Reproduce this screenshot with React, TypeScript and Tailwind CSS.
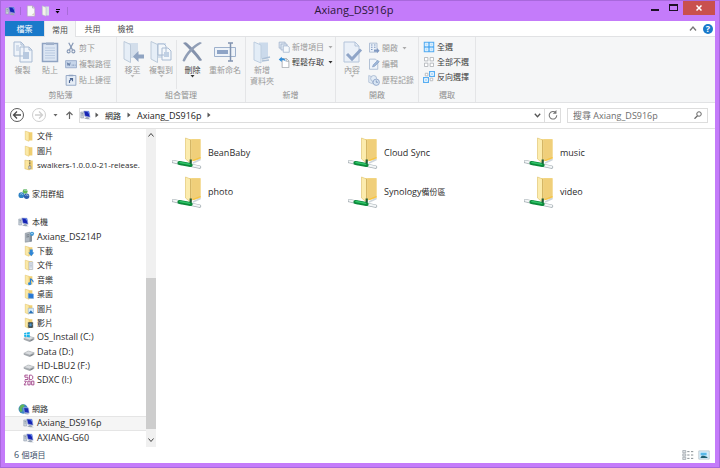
import type { ReactNode } from "react";

const INK = "#8395b3";
const PALE = "#dfe8f3";

/* ---------- text ---------- */

function Mixed({ children }: { children: string }) {
  const parts = children.split(/([\u3000-\u9fff]+)/).filter(Boolean);
  return (
    <span className={`whitespace-pre ${children.length > 20 ? "text-[8px]" : ""}`}>
      {parts.map((part, i) =>
        /[\u3000-\u9fff]/.test(part) ? (
          <span key={i} className="text-[8px]">
            {part}
          </span>
        ) : (
          part
        ),
      )}
    </span>
  );
}

/* ---------- icons ---------- */

type IconProps = { size?: string; box?: string; children: ReactNode };

function Svg({ size = "size-3", box = "0 0 16 16", children }: IconProps) {
  return (
    <svg className={`${size} shrink-0`} viewBox={box} fill="none" aria-hidden="true">
      {children}
    </svg>
  );
}

function ComputerIcon() {
  return (
    <Svg>
      <path d="M1 4h4v8H1z" fill="#c9d1da" stroke="#8b98a8" strokeWidth=".7" />
      <path d="M2 6h2M2 8h2" stroke="#6f7f90" strokeWidth=".8" />
      <path d="M5 2.500 12 3l1.500 8-7-1.500z" fill="#1624b4" stroke="#a9b8d8" strokeWidth=".8" />
      <path d="m9 3 3 .3.800 4.500z" fill="#5d83ea" />
      <path d="m9 10.500 2.500.5.500 1.500 2.500 1-5 .3-4-1.300z" fill="#9aa5b5" />
    </Svg>
  );
}

type FolderKind = "plain" | "download" | "document" | "music" | "desktop" | "picture" | "video";

function FolderIcon({ kind = "plain" }: { kind?: FolderKind }) {
  return (
    <Svg>
      <path d="M7 3h5.500v11H7z" fill="#f0cf72" />
      <path d="m3 1.500 5 1.500v12l-5-2z" fill="#fbe9a6" stroke="#e3c063" strokeWidth=".7" />
      {kind === "download" && <path d="M9 6h4v4h2l-4 5-4-5h2z" fill="#2f86d6" />}
      {kind === "document" && (
        <path d="M8 4h5v10H8zM9 6.500h3M9 8.500h3M9 10.500h3" fill="#e3e8f0" stroke="#9ba9bd" strokeWidth=".7" />
      )}
      {kind === "music" && (
        <>
          <path d="M10 6v6M10 6c1 2 4 2 3.500 5" stroke="#2e7fd0" strokeWidth="1.500" />
          <ellipse cx="9" cy="13" rx="2.300" ry="1.900" fill="#2e8ade" />
        </>
      )}
      {kind === "desktop" && (
        <path d="m7 7 7 1v6l-7-.5z" fill="#2878d4" stroke="#7dabe2" strokeWidth=".7" />
      )}
      {kind === "picture" && (
        <>
          <path d="M7 7h7v7H7z" fill="#d8ecfb" stroke="#8eaccb" strokeWidth=".7" />
          <path d="m7.500 13.500 3-4 3.500 4z" fill="#2872ba" />
        </>
      )}
      {kind === "video" && (
        <>
          <path d="M6.500 7h7v7.500h-7z" fill="#33404a" />
          <path d="M8.500 8.500h3v4h-3z" fill="#4d94c8" />
          <path d="M7.300 7.500v7M12.700 7.500v7" stroke="#e7d9a1" strokeDasharray="1 1" strokeWidth=".7" />
        </>
      )}
    </Svg>
  );
}

function ZipIcon() {
  return (
    <Svg>
      <path d="M6 2h7v12H6z" fill="#efcf74" />
      <path d="m2.500 1.500 6 1v12l-6-1.500z" fill="#fbe6a0" stroke="#dbb657" strokeWidth=".7" />
      <path d="M9 1.500v8" stroke="#6a6655" strokeWidth="2" strokeDasharray="1.200 .8" />
      <path d="M7.500 9.500h3V13h-3z" fill="#d2d5da" stroke="#6e7278" strokeWidth=".6" />
    </Svg>
  );
}

function HomegroupIcon() {
  return (
    <Svg>
      <circle cx="9.500" cy="4.500" r="3.300" fill="#62b85a" />
      <circle cx="4.500" cy="9.500" r="3.800" fill="#2d82c4" />
      <circle cx="11.500" cy="11" r="3.600" fill="#2f5fae" />
      <path d="M8 3.500c1-1.500 3-1 3.500.5M3 8.500c1-1.500 3-1 3.500.5M10 10c1-1.500 3-1 3.500.5" stroke="#cfe8f5" />
    </Svg>
  );
}

function ServerIcon() {
  return (
    <Svg>
      <path d="m3 3 6-1.500V14l-6 1z" fill="#aeb6bf" stroke="#78828c" strokeWidth=".7" />
      <path d="M4.500 5.500 8 5M4.500 8 8 7.500" stroke="#5c666f" />
      <path d="M9 4h3v10l-3 .5z" fill="#858f99" />
      <circle cx="12" cy="3.800" r="2.800" fill="#3b94d2" />
      <path d="M10.500 4.500 12 2.500l1.500 2" stroke="#d4efff" strokeWidth=".8" />
    </Svg>
  );
}

function DriveIcon({ system = false }: { system?: boolean }) {
  return (
    <Svg>
      <path d="m1 10 6-3.500 8 2.500v2.500L9 14.500l-8-3z" fill="#a4a9ae" />
      <path d="m1 9.700 6-3.200 8 2.500-6 3z" fill="#d9dcdf" stroke="#999fa5" strokeWidth=".5" />
      <path d="m10 13 3-1.500" stroke="#596067" strokeWidth=".9" />
      {system && (
        <path d="M1.500 2.500 4.500 2v2.700H1.500zM5.200 1.900 9 1.300v3.400H5.200zM1.500 5.300h3V8l-3-.4zM5.200 5.300H9v3.300l-3.800-.5z" fill="#18b4ea" />
      )}
    </Svg>
  );
}

function CardIcon() {
  return (
    <Svg>
      <path
        d="M6.500 1.500h-4v2.800h4v3h-4M8.500 1.500v6h2.500l2-1.500V3l-2-1.500zM1.500 9.500h3l-3 5h3M6.500 9.500h3v5h-3zM11.500 9.500h3v5h-3z"
        stroke="#98307e"
        strokeWidth="1.100"
      />
    </Svg>
  );
}

function GlobeIcon() {
  return (
    <Svg>
      <circle cx="7" cy="8" r="6.300" fill="#3d86c6" />
      <path d="M3 4c2-2.500 5-2.500 6-1L7 6 5 7l1 3-2 2.500C1.500 10 .8 7 3 4z" fill="#5fb45a" />
      <path d="m7.500 6 6.500.5 1 7-6.500-1z" fill="#1c2fb5" stroke="#b9c7e6" strokeWidth=".8" />
      <path d="m9 14 5 .7" stroke="#95a1b5" strokeWidth="1.500" />
    </Svg>
  );
}

function NetworkFolderIcon() {
  return (
    <Svg size="h-8 w-[30px]" box="0 0 30 32">
      <path d="M17 2h11.500v20.500L17 25z" fill="#f5da8a" />
      <path d="M20 2.500h8.500v19.700L20 24z" fill="#f0cf7a" />
      <path d="m13.500 1 5 2v23l-5-4z" fill="#fcecae" stroke="#e3c774" strokeWidth=".7" />
      <path d="M18.700 3v21" stroke="#c9a855" strokeWidth=".8" />
      <path d="m21 23.500 7.500-3" stroke="#f8c43f" strokeWidth="1.300" />
      <path d="m21 26 7.500-3.500" stroke="#cdd5dc" strokeWidth="1.600" />
      <path d="m1.500 24.700 8 1.800M18 28.200l9.500 2" stroke="#a9b2b7" strokeWidth="3.400" strokeLinecap="round" />
      <path d="m1.500 24.500 8 1.700M18 28l9.500 1.900" stroke="#f3f6f7" strokeWidth="2" strokeLinecap="round" />
      <path d="m7.500 26 11 2" stroke="#0b8a3a" strokeWidth="4.200" strokeLinecap="round" />
      <path d="m8 25.500 9.500 1.800" stroke="#2fc468" strokeWidth="1.600" strokeLinecap="round" />
      <path d="M18.700 22.500v4" stroke="#205b38" strokeWidth="2.200" />
    </Svg>
  );
}

function CopyIcon() {
  return (
    <Svg size="size-6" box="0 0 24 24">
      <path d="M3 2h7l3 3v11H3zM9 7h9l3 3v12H9z" fill="#eff4fa" stroke="#a9bbd3" />
      <path d="M5 6h3M5 8h3M5 10h3" stroke="#b4c5dc" />
      <path d="M12 12h6v7h-6z" fill="#b7c9e0" />
      <path d="M10 2v3h3M18 7v3h3" stroke="#a9bbd3" />
    </Svg>
  );
}

function PasteIcon() {
  return (
    <Svg size="size-6" box="0 0 24 24">
      <path d="M4.500 3.500h15v18h-15z" fill="#dce6f3" stroke="#8fa3c2" strokeWidth="1.500" />
      <path d="M8 2.500h8V5H8z" fill="#9fb0ca" />
      <path d="M7 8h10M7 10.500h10M7 13h10M7 15.500h10M7 18h10" stroke="#bccce2" />
    </Svg>
  );
}

function ScissorsIcon() {
  return (
    <Svg>
      <path d="m5 1 5 9.500M11 1 6 10.500" stroke={INK} strokeWidth="1.500" />
      <circle cx="4.800" cy="12.500" r="2" stroke={INK} strokeWidth="1.400" />
      <circle cx="11.200" cy="12.500" r="2" stroke={INK} strokeWidth="1.400" />
    </Svg>
  );
}

function PathIcon() {
  return (
    <Svg>
      <path d="M.8 3.500h14.500v9.500H.8z" fill="#c7d6ea" stroke="#8ba2c4" />
      <path d="m3 6 1 4 1-3 1 3 1-4M9 9.500h1M11 9.500h1M13 9.500h1" stroke="#58709a" />
    </Svg>
  );
}

function ShortcutIcon() {
  return (
    <Svg>
      <path d="M1.500 2h13v13h-13z" fill="#e6edf6" stroke="#8fa3c2" strokeWidth="1.200" />
      <path d="M5 1h6v2H5z" fill="#8fa3c2" />
      <path d="M6 12V9l3.500-3M6.500 6H10v3.500" stroke="#4c6590" strokeWidth="1.500" />
    </Svg>
  );
}

function MoveIcon() {
  return (
    <Svg size="size-6" box="0 0 24 24">
      <path d="M8 3h9v15H8z" fill="#d3deeb" />
      <path d="m3 1.500 6.500 3v18L3 19z" fill="#e6eef7" stroke="#bccada" />
      <path d="M12 16.500 17.500 11v3.500H23v4h-5.500V22z" fill="#90a4c2" />
    </Svg>
  );
}

function CopyToIcon() {
  return (
    <Svg size="size-6" box="0 0 24 24">
      <path d="M8 3h9v15H8z" fill="#d3deeb" />
      <path d="m2 1.500 6.500 3v18L2 19z" fill="#e6eef7" stroke="#bccada" />
      <path d="M9 4h6l2 2v9H9zM13 8h6l3 3v9h-9z" fill="#f3f7fb" stroke="#a9bbd3" />
      <path d="M15 12h5v5h-5z" fill="#c0d0e4" />
    </Svg>
  );
}

function DeleteIcon() {
  return (
    <Svg size="size-6" box="0 0 24 24">
      <path d="M2 3c2-1 3-1 4 0 6 5 11 11 15 17-1 1-2 1-3 .5C13 14 8 9 2 3z" fill="#8492ac" />
      <path d="M21 3C14 7 7 14 4 21c-1 1-2 .5-2.500-.5C5 12 12 5 19 2z" fill="#909eb6" />
    </Svg>
  );
}

function RenameIcon() {
  return (
    <Svg size="size-6" box="0 0 24 24">
      <path d="M1.500 7.500h21v9h-21z" fill="#eef3f9" stroke="#9eb1cc" />
      <path d="M4 10h11v4H4z" fill="#8ea4c6" />
      <path d="M15 3h2.500M20 3h-2.500v18M20 21h-5M17.500 3v18" stroke="#8193b0" strokeWidth="1.500" />
    </Svg>
  );
}

function NewFolderIcon() {
  return (
    <Svg size="size-6" box="0 0 24 24">
      <path d="M9 2.500h9v16H9z" fill="#cbdaeb" />
      <path d="m4 2 7 3v18l-7-3z" fill="#e3edf7" stroke="#bdcddf" />
      <path d="m12 19 8-2M12 21l7-1" stroke="#aec1d7" strokeWidth="1.500" />
    </Svg>
  );
}

function NewItemIcon() {
  return (
    <Svg>
      <path d="M1.500 1.500h8v8h-8z" fill={PALE} stroke="#9db0cb" />
      <path d="M4 4h8v8H4z" fill={PALE} stroke="#9db0cb" />
      <path d="M7 6.500h6l2 2V15H7z" fill="#f6f9fc" stroke="#9db0cb" />
    </Svg>
  );
}

function EasyAccessIcon() {
  return (
    <Svg>
      <path d="M5.500 3.500h6l3 3v9h-9z" fill="#fff" stroke="#9a9fa6" />
      <path d="M11 3.500V7h3.500" stroke="#9a9fa6" />
      <path d="M5 1 1 4.500 5 8V5.800c2-.5 4-.2 5 1.700C10 4 8 2.800 5 3z" fill="#2f8cd8" />
    </Svg>
  );
}

function PropertiesIcon() {
  return (
    <Svg size="size-6" box="0 0 24 24">
      <path d="M4 2h11l4 4v16H4z" fill="#eaf0f8" stroke="#b4c4da" />
      <path d="M15 2v4h4" stroke="#b4c4da" />
      <path d="m7 14 5 5L21 9.500" stroke="#8fa5c8" strokeWidth="3" />
    </Svg>
  );
}

function OpenIcon() {
  return (
    <Svg>
      <path d="M2 1.500h10v12H2z" fill="#eaf0f8" stroke="#9db0cb" />
      <path d="M4 4h2M8 4h2M4 7h2M8 7h2M4 10h2" stroke="#7f98c0" strokeWidth="1.500" />
      <path d="M8 10h4V8l3.500 3.500L12 15v-2H8z" fill="#8199c1" />
    </Svg>
  );
}

function EditIcon() {
  return (
    <Svg>
      <path d="M2 1.500h8l3 3V15H2z" fill="#f0f4fa" stroke="#9db0cb" />
      <path d="m6 12 1-3 6-6 2 2-6 6z" fill="#9db6d8" stroke="#7f98c0" strokeWidth=".8" />
    </Svg>
  );
}

function HistoryIcon() {
  return (
    <Svg>
      <path d="m1 2 5 2v9l-5-2z" fill="#e3ecf6" stroke="#a9bbd3" />
      <circle cx="7.500" cy="6" r="4" fill="#e3ecf6" stroke="#9db0cb" />
      <circle cx="11" cy="11" r="4.200" fill="#d8e5f3" stroke="#8199c1" />
      <path d="M11 8.500V11h2.500" stroke="#6d87b1" />
    </Svg>
  );
}

function SelectAllIcon() {
  return (
    <Svg>
      <path d="M1 1h14v14H1z" fill="#58aef2" />
      <path d="M3 3h3.500v3.500H3zM9.500 3H13v3.500H9.500zM3 9.500h3.500V13H3zM9.500 9.500H13V13H9.500z" fill="#b5defc" stroke="#fff" />
    </Svg>
  );
}

function SelectNoneIcon() {
  return (
    <Svg>
      <path d="M2 2h4.500v4.500H2zM9.500 2H14v4.500H9.500zM2 9.500h4.500V14H2zM9.500 9.500H14V14H9.500z" fill="#fff" stroke="#a7abb0" />
    </Svg>
  );
}

function InvertIcon() {
  return (
    <Svg>
      <path d="M8 0h8v8H8zM0 8h8v8H0z" fill="#58aef2" />
      <path d="M10 2h4v4h-4zM2 10h4v4H2z" fill="#b5defc" stroke="#fff" />
      <path d="M3 3h3.500v3.500H3zM9.500 9.500H13V13H9.500z" fill="#fff" stroke="#a7abb0" />
    </Svg>
  );
}

function Caret({ className = "text-[#aaaaaa]" }: { className?: string }) {
  return (
    <svg className={`h-[3px] w-[5px] shrink-0 ${className}`} viewBox="0 0 5 3" aria-hidden="true">
      <path d="M.5 0h4l-2 2.500z" fill="currentColor" />
    </svg>
  );
}

function Crumb() {
  return (
    <svg className="h-[6px] w-1 shrink-0" viewBox="0 0 4 6" aria-hidden="true">
      <path d="M.5.500 3.500 3l-3 2.500z" fill="#555" />
    </svg>
  );
}

/* ---------- ribbon ---------- */

type ActionProps = { icon: ReactNode; lines: string[]; caret?: boolean; active?: boolean; width: string };

function BigAction({ icon, lines, caret, active, width }: ActionProps) {
  return (
    <button type="button" className={`flex flex-col items-center ${width} ${active ? "text-[#3c3c3c]" : "text-[#9a9a9a]"}`}>
      {icon}
      {lines.map((line) => (
        <span key={line} className="mt-px h-[10px] whitespace-nowrap leading-[10px]">
          {line}
        </span>
      ))}
      {caret && <Caret className={active ? "text-[#333333]" : "text-[#bbbbbb]"} />}
    </button>
  );
}

function SmallAction({ icon, label, caret, active }: { icon: ReactNode; label: string; caret?: boolean; active?: boolean }) {
  return (
    <button
      type="button"
      className={`flex h-3 items-center gap-[2px] whitespace-nowrap leading-3 ${active ? "text-[#3c3c3c]" : "text-[#9a9a9a]"}`}
    >
      {icon}
      {label}
      {caret && (
        <span className="pl-[2px]">
          <Caret className={active ? "text-[#333333]" : "text-[#aaaaaa]"} />
        </span>
      )}
    </button>
  );
}

function Group({ title, width, children }: { title: string; width: string; children: ReactNode }) {
  return (
    <section className={`flex shrink-0 flex-col border-r border-[#e4e5e7] ${width}`}>
      <div className="flex h-[52px] pt-[3px]">{children}</div>
      <h2 className="text-center leading-3 text-[#8f8f8f]">{title}</h2>
    </section>
  );
}

function Ribbon() {
  return (
    <div className="flex h-[67px] overflow-hidden border-y border-[#e1e2e4] bg-[#f5f6f7]">
      <Group title="剪貼簿" width="w-[112px]">
        <div className="flex pl-1">
          <BigAction icon={<CopyIcon />} lines={["複製"]} width="w-[27px]" />
          <BigAction icon={<PasteIcon />} lines={["貼上"]} width="w-[28px]" />
        </div>
        <div className="flex flex-col gap-1 pl-px pt-[2px]">
          <SmallAction icon={<ScissorsIcon />} label="剪下" />
          <SmallAction icon={<PathIcon />} label="複製路徑" />
          <SmallAction icon={<ShortcutIcon />} label="貼上捷徑" />
        </div>
      </Group>
      <Group title="組合管理" width="w-[129px]">
        <div className="flex pl-px">
          <BigAction icon={<MoveIcon />} lines={["移至"]} caret width="w-[29px]" />
          <BigAction icon={<CopyToIcon />} lines={["複製到"]} caret width="w-[28px]" />
        </div>
        <div className="ml-px flex border-l border-[#e4e5e7]">
          <BigAction icon={<DeleteIcon />} lines={["刪除"]} caret active width="w-[31px]" />
          <BigAction icon={<RenameIcon />} lines={["重新命名"]} width="w-[34px]" />
        </div>
      </Group>
      <Group title="新增" width="w-[90px]">
        <BigAction icon={<NewFolderIcon />} lines={["新增", "資料夾"]} width="w-[32px]" />
        <div className="flex flex-col gap-[3px] pt-px">
          <SmallAction icon={<NewItemIcon />} label="新增項目" caret />
          <SmallAction icon={<EasyAccessIcon />} label="輕鬆存取" caret active />
        </div>
      </Group>
      <Group title="開啟" width="w-[83px]">
        <BigAction icon={<PropertiesIcon />} lines={["內容"]} caret width="w-[32px]" />
        <div className="flex flex-col gap-1 pt-[2px]">
          <SmallAction icon={<OpenIcon />} label="開啟" caret />
          <SmallAction icon={<EditIcon />} label="編輯" />
          <SmallAction icon={<HistoryIcon />} label="歷程記錄" />
        </div>
      </Group>
      <Group title="選取" width="w-[57px]">
        <div className="flex flex-col gap-[3px] pl-1 pt-px">
          <SmallAction icon={<SelectAllIcon />} label="全選" active />
          <SmallAction icon={<SelectNoneIcon />} label="全部不選" active />
          <SmallAction icon={<InvertIcon />} label="反向選擇" active />
        </div>
      </Group>
    </div>
  );
}

/* ---------- window parts ---------- */

function TitleBar() {
  return (
    <header className="grid h-5 grid-cols-[1fr_auto_1fr] items-start">
      <div className="flex h-5 items-center gap-[3px]">
        <ComputerIcon />
        <span className="h-2 w-px bg-[#a86bd8]" />
        <button type="button" aria-label="內容" className="pl-px">
          <Svg>
            <path d="M3 1h7l3 3v11H3z" fill="#f7f7f7" stroke="#a9a0b5" strokeWidth=".7" />
            <path d="M10 1v3h3" stroke="#a9a0b5" />
            <path d="m9 13 4-3v4z" fill="#d4cfc0" />
          </Svg>
        </button>
        <button type="button" aria-label="新增資料夾">
          <Svg>
            <path d="M7 2h5v12H7z" fill="#d7e2e6" />
            <path d="m3 1 5 2v12l-5-2z" fill="#f4f3ea" stroke="#a9bac2" strokeWidth=".7" />
          </Svg>
        </button>
        <button type="button" aria-label="自訂快速存取工具列" className="flex flex-col items-center gap-px">
          <span className="h-px w-1 bg-black" />
          <Caret className="text-black" />
        </button>
        <span className="ml-1 h-2 w-px bg-[#a86bd8]" />
      </div>
      <h1 className="pr-3 text-[11px] leading-[18px] text-[#2a1838]">Axiang_DS916p</h1>
      <div className="flex justify-end">
        <button type="button" aria-label="最小化" className="flex h-[13px] w-[19px] items-end justify-center pb-[3px]">
          <span className="h-[2px] w-2 bg-[#1d1126]" />
        </button>
        <button type="button" aria-label="最大化" className="flex h-[13px] w-[19px] items-end justify-center pb-[3px]">
          <span className="h-[7px] w-[9px] border border-t-2 border-[#1d1126]" />
        </button>
        <button type="button" aria-label="關閉" className="flex h-[14px] w-8 items-center justify-center bg-[#c9504e]">
          <svg className="size-[6px]" viewBox="0 0 6 6" aria-hidden="true">
            <path d="m.5.500 5 5m0-5-5 5" stroke="#fff" strokeWidth="1.500" />
          </svg>
        </button>
      </div>
    </header>
  );
}

function Tabs() {
  return (
    <div className="flex h-[15px] items-stretch bg-white leading-[15px] text-[#4a4a4a]">
      <button type="button" className="w-[39px] bg-[#1979ca] text-white">檔案</button>
      <button type="button" className="-mb-px w-8 border-x border-[#e1e2e4] bg-[#f5f6f7]">常用</button>
      <button type="button" className="w-[33px]">共用</button>
      <button type="button" className="w-[33px]">檢視</button>
      <div className="ml-auto flex items-center gap-[6px] pr-[2px]">
        <button type="button" aria-label="最小化功能區">
          <svg className="h-[5px] w-2" viewBox="0 0 8 5" fill="none" aria-hidden="true">
            <path d="m1 4.500 3-3.500 3 3.500" stroke="#777" strokeWidth="1.300" />
          </svg>
        </button>
        <button type="button" aria-label="說明" className="size-[10px] rounded-full bg-[#1979ca] text-[9px] leading-[10px] font-bold text-white">
          ?
        </button>
      </div>
    </div>
  );
}

function AddressBar() {
  return (
    <div className="flex h-[26px] items-center border-b border-[#e2e2e2] bg-white pr-[7px] pb-px pl-1 text-[#222222]">
      <button type="button" aria-label="上一頁">
        <Svg size="size-4">
          <circle cx="8" cy="8" r="6.500" stroke="#5b5b5b" />
          <path d="M12 8H4.500M8 4.500 4.500 8 8 11.500" stroke="#4b4b4b" strokeWidth="1.300" />
        </Svg>
      </button>
      <button type="button" aria-label="下一頁" className="ml-[6px]">
        <Svg size="size-4">
          <circle cx="8" cy="8" r="6.500" stroke="#cfcfcf" />
          <path d="M4 8h7.500M8 4.500 11.500 8 8 11.500" stroke="#cfcfcf" strokeWidth="1.300" />
        </Svg>
      </button>
      <button type="button" aria-label="最近的位置" className="ml-[6px]">
        <Caret className="text-[#666666]" />
      </button>
      <button type="button" aria-label="上一層" className="ml-2">
        <svg className="h-2 w-[7px]" viewBox="0 0 7 8" fill="none" aria-hidden="true">
          <path d="M3.500 8V1M.5 4l3-3 3 3" stroke="#666" strokeWidth="1.200" />
        </svg>
      </button>
      <nav aria-label="路徑" className="ml-[6px] flex h-[15px] flex-1 items-center border border-[#dddddd] leading-[13px]">
        <ComputerIcon />
        <span className="ml-[3px] flex items-center gap-[6px]">
          <Crumb />
          <button type="button"><Mixed>網路</Mixed></button>
          <Crumb />
          <button type="button">Axiang_DS916p</button>
          <Crumb />
        </span>
        <button type="button" aria-label="先前的位置" className="ml-auto px-[3px]">
          <svg className="h-[5px] w-[7px]" viewBox="0 0 7 5" fill="none" aria-hidden="true">
            <path d="m.8.800 2.700 3 2.700-3" stroke="#555" strokeWidth="1.300" />
          </svg>
        </button>
        <button type="button" aria-label="重新整理" className="flex h-full w-4 items-center justify-center border-l border-[#dddddd]">
          <Svg size="size-[10px]">
            <path d="M12.500 4.500a6 6 0 1 0 1.500 4" stroke="#777" strokeWidth="1.700" />
            <path d="M13.500 0v6h-6z" fill="#777" />
          </Svg>
        </button>
      </nav>
      <div className="ml-[6px] flex h-[15px] w-[141px] items-center border border-[#dddddd] px-[5px]">
        <input
          type="text"
          aria-label="搜尋 Axiang_DS916p"
          placeholder="搜尋 Axiang_DS916p"
          className="h-[13px] min-w-0 flex-1 bg-transparent leading-[13px] outline-none placeholder:text-[#6d6d6d]"
        />
        <Svg size="size-2">
          <circle cx="10" cy="6" r="4.500" stroke="#666" strokeWidth="2" />
          <path d="m7 9.500-6 6" stroke="#666" strokeWidth="2.500" />
        </Svg>
      </div>
    </div>
  );
}

type Node = { label: string; icon: ReactNode; root?: boolean; selected?: boolean } | null;

const tree: Node[] = [
  { label: "文件", icon: <FolderIcon /> },
  { label: "圖片", icon: <FolderIcon /> },
  { label: "swalkers-1.0.0.0-21-release.", icon: <ZipIcon /> },
  null,
  { label: "家用群組", icon: <HomegroupIcon />, root: true },
  null,
  { label: "本機", icon: <ComputerIcon />, root: true },
  { label: "Axiang_DS214P", icon: <ServerIcon /> },
  { label: "下載", icon: <FolderIcon kind="download" /> },
  { label: "文件", icon: <FolderIcon kind="document" /> },
  { label: "音樂", icon: <FolderIcon kind="music" /> },
  { label: "桌面", icon: <FolderIcon kind="desktop" /> },
  { label: "圖片", icon: <FolderIcon kind="picture" /> },
  { label: "影片", icon: <FolderIcon kind="video" /> },
  { label: "OS_Install (C:)", icon: <DriveIcon system /> },
  { label: "Data (D:)", icon: <DriveIcon /> },
  { label: "HD-LBU2 (F:)", icon: <DriveIcon /> },
  { label: "SDXC (I:)", icon: <CardIcon /> },
  null,
  { label: "網路", icon: <GlobeIcon />, root: true },
  { label: "Axiang_DS916p", icon: <ComputerIcon />, selected: true },
  { label: "AXIANG-G60", icon: <ComputerIcon /> },
];

function Sidebar() {
  return (
    <ul className="grid w-[141px] shrink-0 auto-rows-fr overflow-hidden pb-[2px]">
      {tree.map((node, i) => (
        <li key={i} className="flex min-h-3">
          {node && (
            <button
              type="button"
              className={`flex w-full items-center gap-[2px] border-y text-left leading-3 ${node.root ? "pl-[13px]" : "pl-[18px]"} ${
                node.selected ? "border-[#e5e5e5] bg-[#f5f5f5]" : "border-transparent"
              }`}
            >
              {node.icon}
              <Mixed>{node.label}</Mixed>
            </button>
          )}
        </li>
      ))}
    </ul>
  );
}

function ScrollBar() {
  return (
    <div className="flex w-[10px] shrink-0 flex-col bg-[#f0f0f0]" aria-hidden="true">
      <div className="flex h-3 items-center justify-center">
        <svg className="h-1 w-[6px]" viewBox="0 0 6 4" fill="none">
          <path d="m.5 3.500 2.500-3 2.500 3" stroke="#444" />
        </svg>
      </div>
      <div className="flex-[137]" />
      <div className="flex-[151] bg-[#cdcdcd]" />
      <div className="flex h-[18px] items-center justify-center pt-1">
        <svg className="h-1 w-[6px]" viewBox="0 0 6 4" fill="none">
          <path d="m.5.500 2.500 3 2.500-3" stroke="#444" />
        </svg>
      </div>
    </div>
  );
}

const shares = ["BeanBaby", "Cloud Sync", "music", "photo", "Synology備份區", "video"];

function Files() {
  return (
    <ul className="grid flex-1 auto-rows-[39px] grid-cols-[repeat(auto-fill,176px)] pt-1 pl-4">
      {shares.map((name) => (
        <li key={name}>
          <button type="button" className="flex h-[39px] items-center gap-[6px]">
            <NetworkFolderIcon />
            <Mixed>{name}</Mixed>
          </button>
        </li>
      ))}
    </ul>
  );
}

function StatusBar() {
  return (
    <footer className="flex h-4 items-center justify-between bg-white pr-[5px] pl-[9px] leading-4 text-[#3d4f68]">
      <Mixed>6 個項目</Mixed>
      <div className="flex gap-1">
        <button type="button" aria-label="詳細資料">
          <Svg>
            <path d="M1 2h4v3H1zM1 6.500h4v3H1zM1 11h4v3H1z" fill="#dfe3e6" stroke="#8e969d" strokeWidth=".8" />
            <path d="M7 3.500h3M12 3.500h3M7 8h3M12 8h3M7 12.500h3M12 12.500h3" stroke="#7b8389" strokeWidth="1.200" />
          </Svg>
        </button>
        <button type="button" aria-label="大圖示">
          <Svg>
            <path d="M1 2.500h14v11H1z" fill="#d6eefb" stroke="#b9c3ca" />
            <path d="M3.500 5h8v3.500h-8z" fill="#58b9e8" />
            <path d="M3.500 11c1-2.500 3-3 9-.5V12h-9z" fill="#1f5f70" />
          </Svg>
        </button>
      </div>
    </footer>
  );
}

export default function App() {
  return (
    <div className="flex min-h-screen flex-col border border-[#a868dc] bg-[#c47bfa] px-1 pb-1 font-['Open_Sans','Noto_Sans_CJK_TC',sans-serif] text-[9px] text-[#2b2b2b]">
      <TitleBar />
      <div className="text-[8px]">
        <Tabs />
        <Ribbon />
      </div>
      <AddressBar />
      <main className="flex flex-1 bg-white">
        <Sidebar />
        <ScrollBar />
        <Files />
      </main>
      <StatusBar />
    </div>
  );
}
